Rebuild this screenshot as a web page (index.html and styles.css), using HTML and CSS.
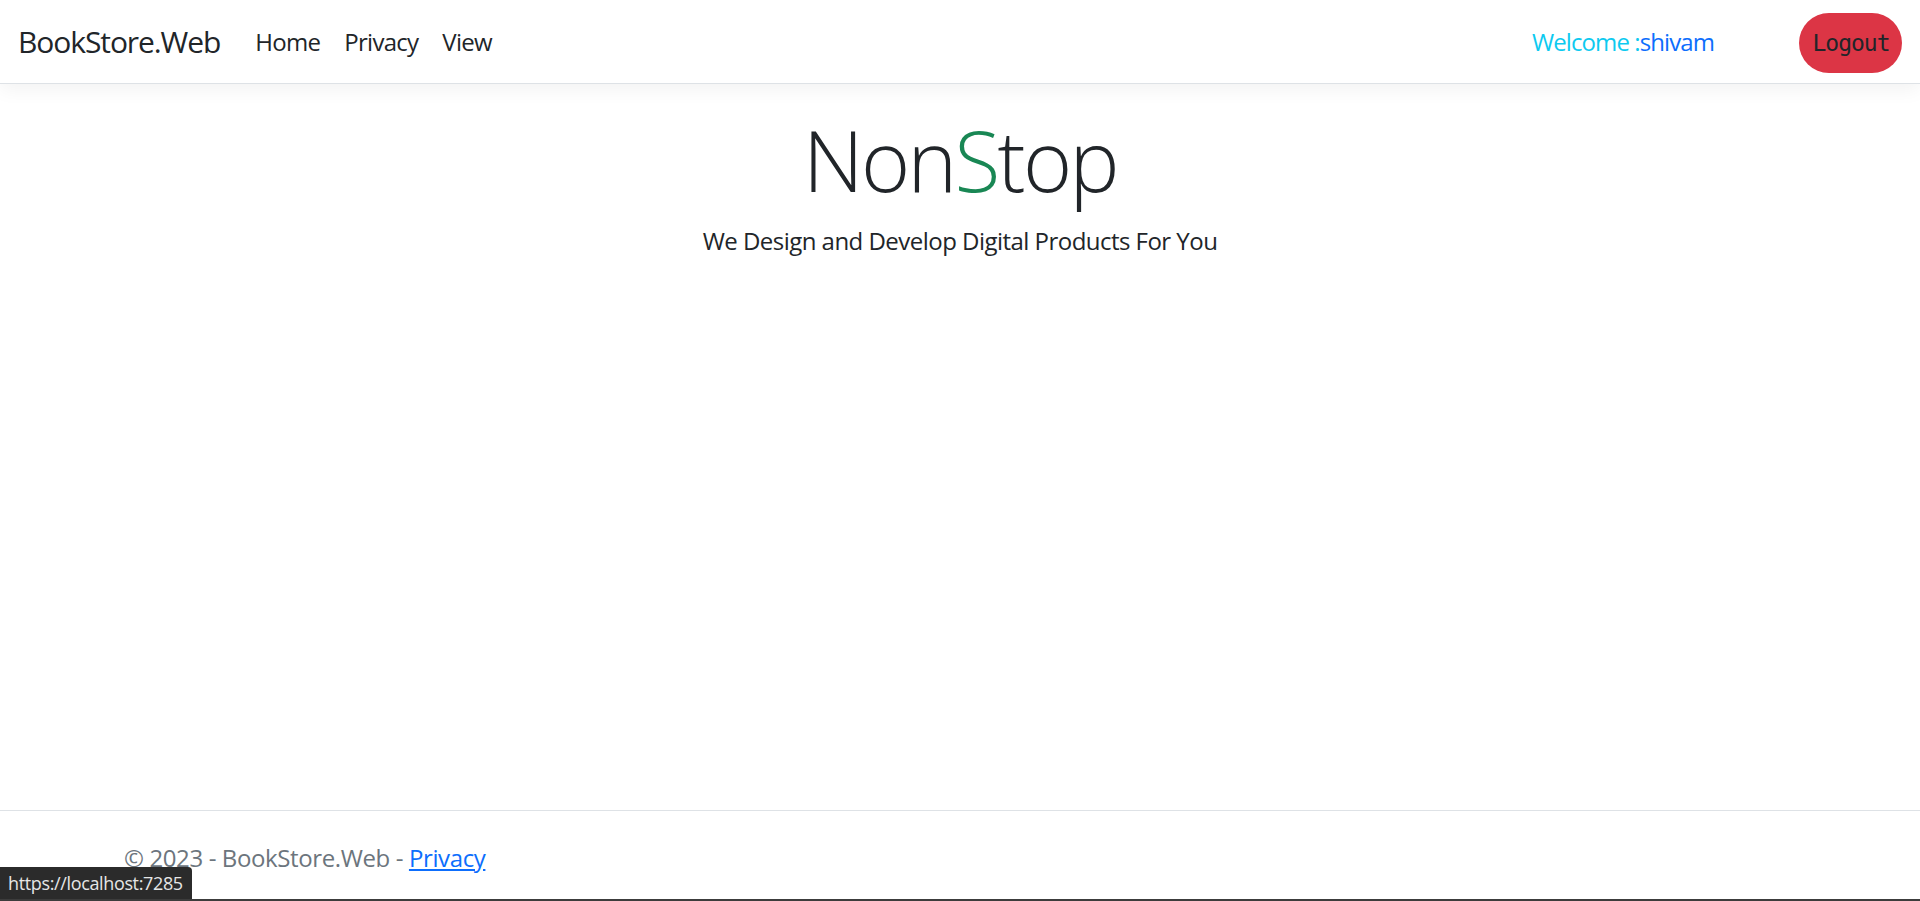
FILE: index.html
```html
<!DOCTYPE html>
<html lang="en">
<head>
<meta charset="utf-8">
<title>Home Page - BookStore.Web</title>
<link rel="stylesheet" href="styles.css">
</head>
<body>
<header class="navbar">
  <div class="nav-left">
    <a class="brand" href="#">BookStore.Web</a>
    <ul class="nav-links">
      <li><a class="nav-link" href="#">Home</a></li>
      <li><a class="nav-link" href="#">Privacy</a></li>
      <li><a class="nav-link" href="#">View</a></li>
    </ul>
  </div>
  <div class="nav-right">
    <span class="welcome">Welcome :<span class="user">shivam</span></span>
    <button class="logout" type="button">Logout</button>
  </div>
</header>
<main class="main">
  <h1 class="display">Non<span class="green">S</span>top</h1>
  <p class="tagline">We Design and Develop Digital Products For You</p>
</main>
<footer class="footer">
  <div class="footer-inner">&copy; 2023 - BookStore.Web - <a href="#" class="footer-link">Privacy</a></div>
</footer>
<div class="bottom-line"></div>
<div class="status">https://localhost:7285</div>
</body>
</html>
```
FILE: styles.css
```css
* { box-sizing: border-box; }
html, body { margin: 0; padding: 0; height: 100%; }
body {
  font-family: "Open Sans", "Noto Sans", sans-serif;
  font-size: 24px;
  color: #212529;
  background: #fff;
  display: flex;
  flex-direction: column;
  min-height: 100vh;
  overflow: hidden;
}
a { text-decoration: none; color: inherit; }

.navbar {
  height: 84px;
  border-bottom: 1px solid #dee2e6;
  box-shadow: 0 6px 18px rgba(0,0,0,.05);
  display: flex;
  align-items: center;
  justify-content: space-between;
  padding: 0 18px 0 18px;
  flex: none;
}
.nav-left { display: flex; align-items: center; }
.brand {
  font-size: 30px;
  letter-spacing: -0.036em;
  color: #212529;
  margin-right: 23px;
  line-height: 1;
}
.nav-links {
  list-style: none;
  display: flex;
  margin: 0;
  padding: 0;
}
.nav-link {
  display: block;
  padding: 0 12px;
  color: #212529;
  letter-spacing: -0.03em;
}
.nav-right { display: flex; align-items: center; }
.welcome { color: #0dcaf0; margin-right: 85px; letter-spacing: -0.038em; }
.user { color: #0d6efd; }
.logout {
  font-family: "DejaVu Sans Mono", "Liberation Mono", monospace;
  font-size: 23px;
  letter-spacing: -1px;
  color: #212529;
  background: #dc3545;
  border: none;
  border-radius: 30px;
  height: 60px;
  width: 103px;
  padding: 0 0 0 1px;
  margin-top: 2px;
}

.main {
  flex: 1;
  text-align: center;
  padding-top: 26px;
}
.display {
  font-size: 84px;
  font-weight: 300;
  letter-spacing: -0.032em;
  line-height: 1.2;
  margin: 0 0 12px;
}
.green { color: #198754; }
.tagline { margin: 0; line-height: 1.5; letter-spacing: -0.022em; }

.footer {
  flex: none;
  height: 89px;
  border-top: 1px solid #dee2e6;
  display: flex;
  align-items: center;
  padding-top: 4px;
  color: #6c757d;
  white-space: nowrap;
  letter-spacing: -0.016em;
}
.footer-inner { padding-left: 124px; }
.footer-link { color: #0d6efd; text-decoration: underline; }
.bottom-line { flex: none; height: 2px; background: #3c3c3c; }

.status {
  position: fixed;
  left: 0;
  bottom: 2px;
  height: 32px;
  padding: 0 9px 0 8px;
  background: #2b2b2b;
  color: #e6e6e6;
  font-size: 18px;
  letter-spacing: -0.02em;
  line-height: 32px;
  border-top-right-radius: 4px;
}
```
